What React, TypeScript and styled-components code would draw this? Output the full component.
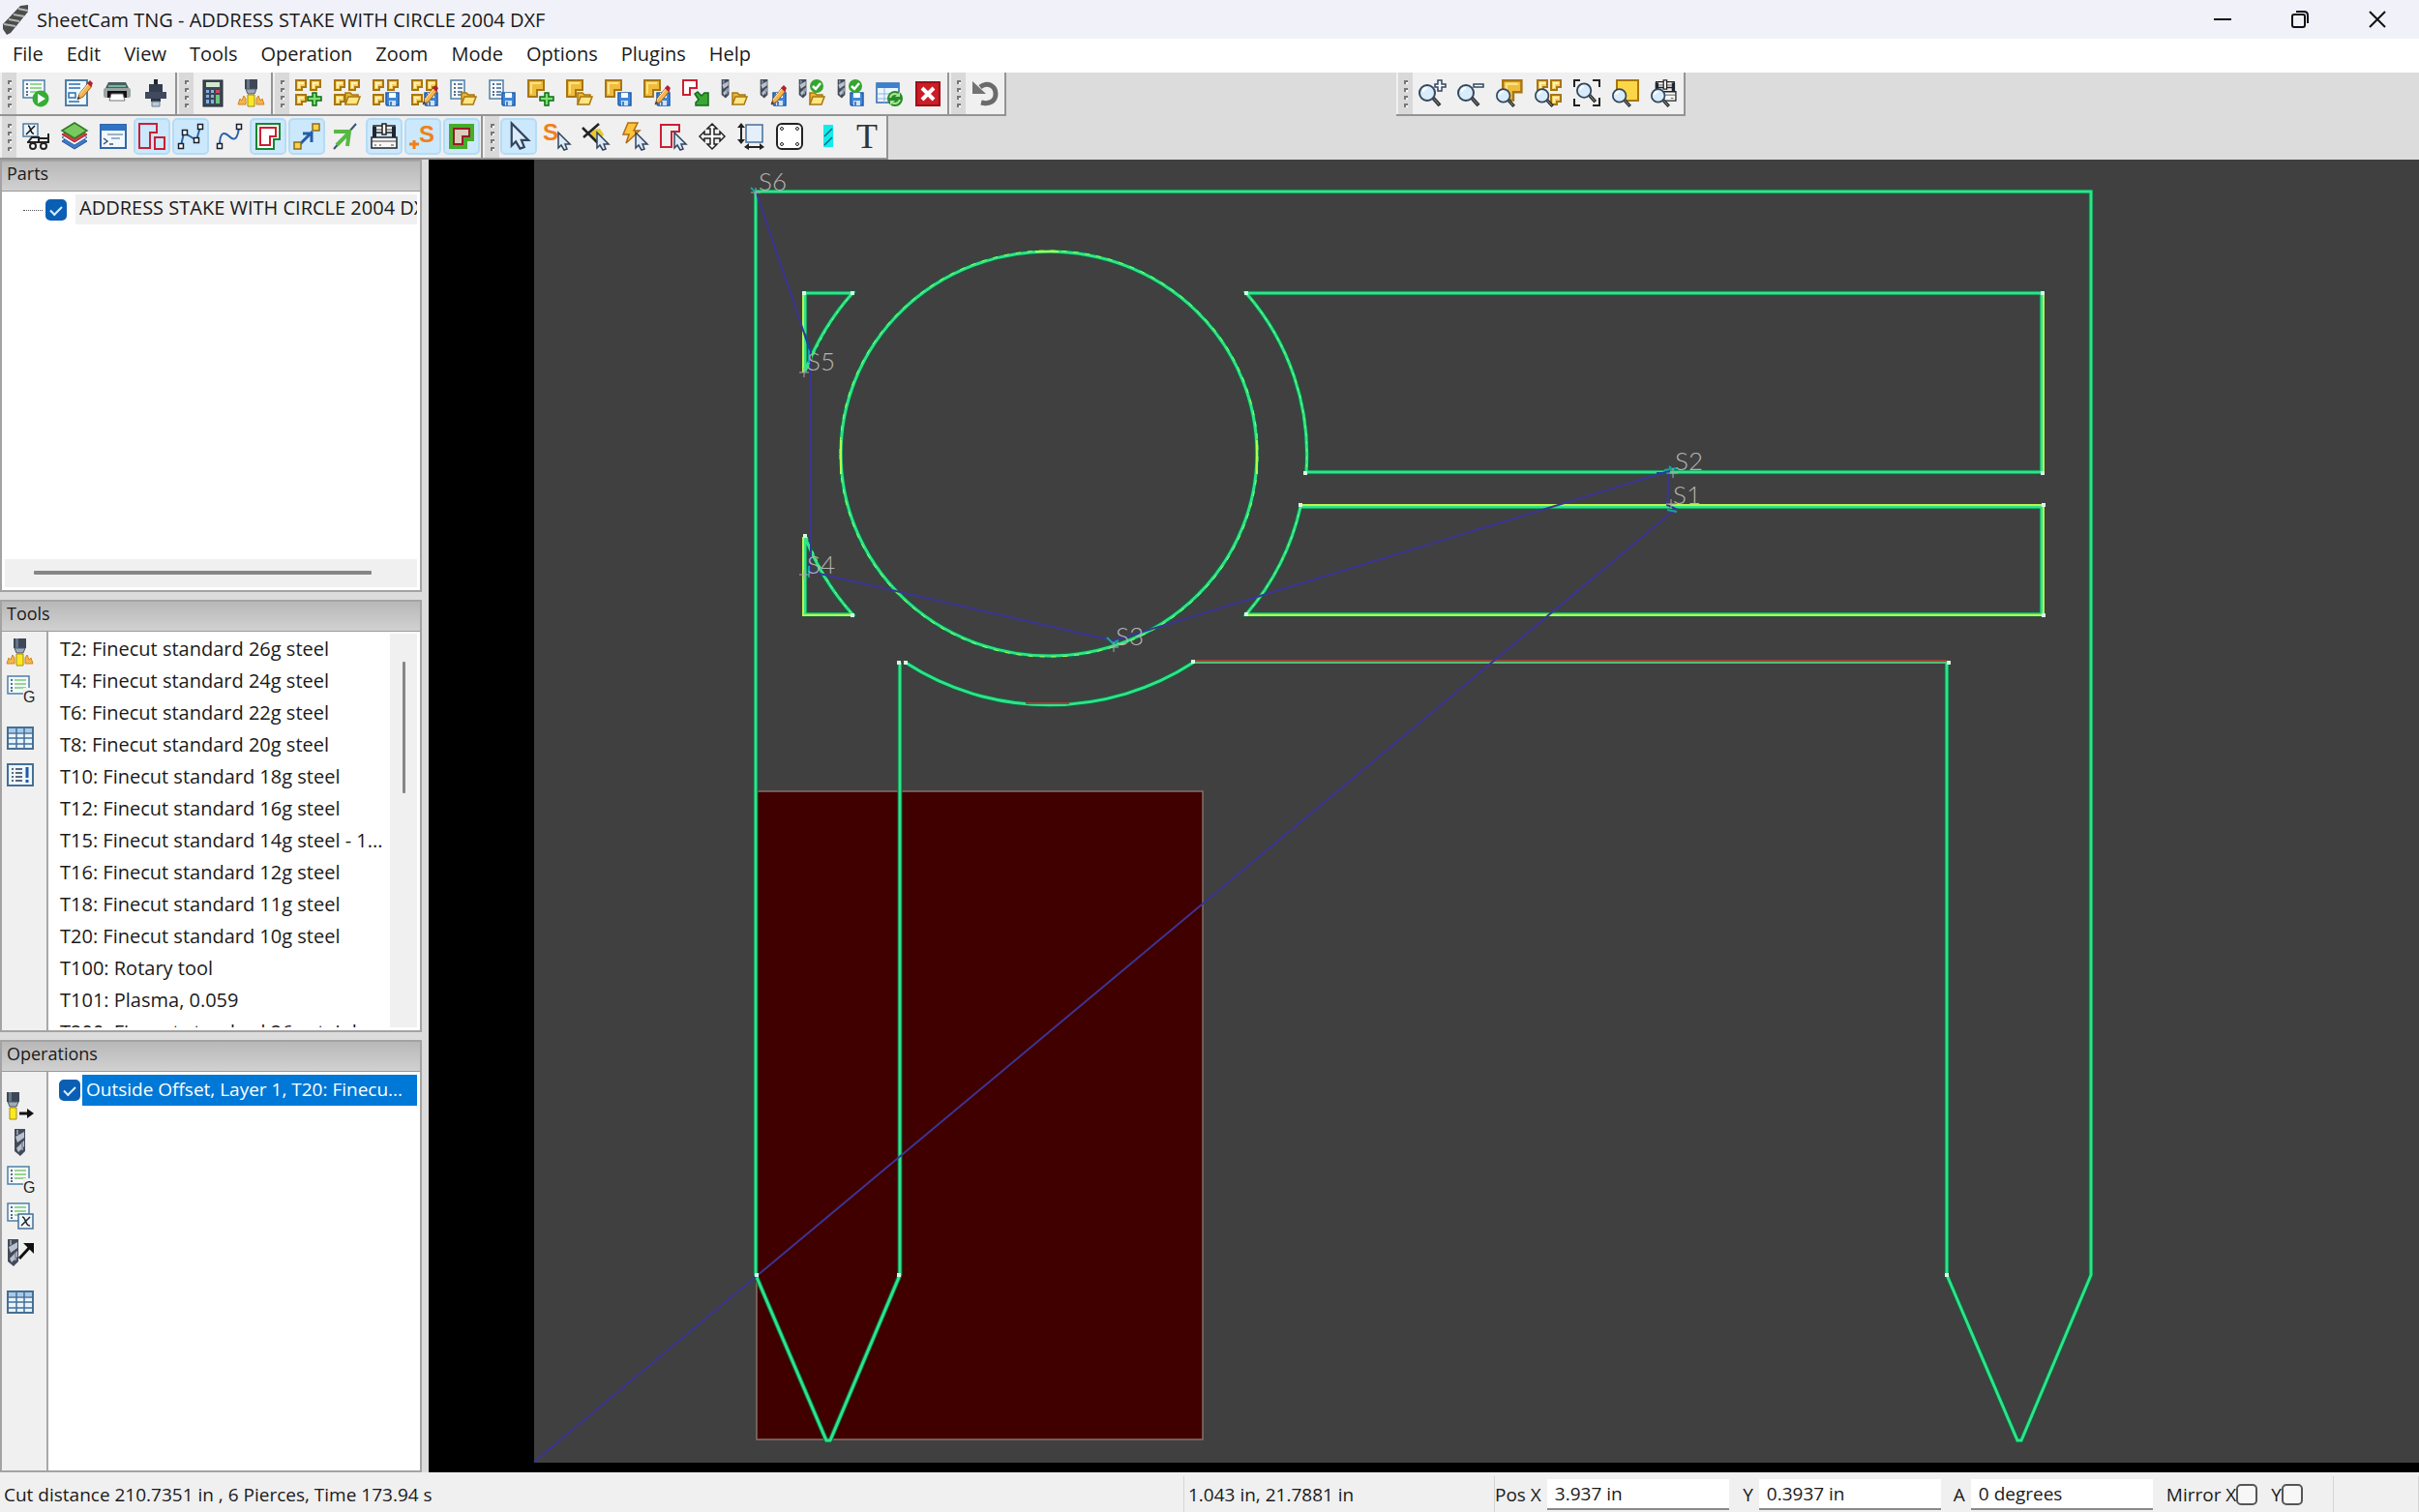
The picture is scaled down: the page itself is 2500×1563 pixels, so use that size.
import React, { useState } from 'react';
import styled, { createGlobalStyle } from 'styled-components';

const Global = createGlobalStyle`
  * { box-sizing: border-box; }
  html, body, #root { height: 100%; margin: 0; }
  body { overflow: hidden; }
  body, button, input {
    font-family: "Open Sans", "Noto Sans", sans-serif;
    font-size: 19px;
    line-height: 24px;
    color: #1a1a1a;
  }
`;

const Window = styled.div`
  display: flex;
  flex-direction: column;
  height: 100vh;
  background: #dcdcdc;
`;

const TitleBar = styled.header`
  display: flex;
  align-items: center;
  flex: none;
  height: 40px;
  padding: 0 3px 0 2px;
  background: #f1f2f9;
`;

const Title = styled.h1`
  flex: 1;
  margin: 0 0 0 8px;
  padding-top: 2px;
  font-size: 20px;
  font-weight: 400;
  white-space: nowrap;
`;

const CaptionButton = styled.button`
  display: grid;
  place-items: center;
  width: 80px;
  height: 40px;
  padding: 0;
  border: 0;
  background: none;
`;

const MenuBar = styled.nav`
  display: flex;
  flex: none;
  height: 35px;
  padding-left: 1px;
  background: #fff;
`;

const MenuButton = styled.button`
  padding: 0 12px 3px;
  border: 0;
  background: none;
  font-size: 20px;
`;

const ToolbarRow = styled.div`
  display: flex;
  flex: none;
  height: 45px;
`;

const ToolbarBox = styled.div<{ $far?: boolean }>`
  display: flex;
  height: 45px;
  margin-left: ${p => (p.$far ? '403px' : '0')};
  padding-left: 2px;
  border: solid #949494;
  border-width: 0 2px 2px 0;
  background: #f0f0f0;
`;

const Grip = styled.span`
  display: flex;
  flex-direction: column;
  align-items: center;
  justify-content: center;
  gap: 4px;
  width: 15px;
  height: 100%;
  background: #d9d9d9;
`;

const GripDot = styled.i`
  width: 4px;
  height: 4px;
  border: solid #777;
  border-width: 2px 0 0 2px;
  background: #fff;
`;

const ToolButton = styled.button<{ $on?: boolean; $gap?: boolean }>`
  display: grid;
  place-items: center;
  width: 38px;
  height: 38px;
  margin: 2px ${p => (p.$gap ? '5px' : '1px')} 0 1px;
  padding: 0;
  border: 2px solid ${p => (p.$on ? '#b4dcf5' : 'transparent')};
  border-radius: 5px;
  background: ${p => (p.$on ? '#cce8fc' : 'none')};
`;

const Main = styled.main`
  display: flex;
  flex: 1;
  min-height: 0;
`;

const Sidebar = styled.aside`
  display: flex;
  flex-direction: column;
  flex: none;
  gap: 8px;
  width: 443px;
  padding-right: 7px;
`;

const Panel = styled.section`
  display: flex;
  flex-direction: column;
  flex: 1;
  min-height: 0;
  border: 2px solid #a3a3a3;
`;

const PanelTitle = styled.h2`
  flex: none;
  height: 31px;
  margin: 0;
  padding: 0 5px;
  border-bottom: 1px solid #999;
  background: linear-gradient(#b8b8b8, #d1d1d1);
  font-size: 18px;
  font-weight: 400;
`;

const PanelBody = styled.div`
  display: flex;
  flex: 1;
  min-height: 0;
  background: #fff;
`;

const SideTools = styled.div<{ $low?: boolean }>`
  display: flex;
  flex-direction: column;
  flex: none;
  width: 48px;
  padding-top: ${p => (p.$low ? '16px' : '2px')};
  border-right: 2px solid #a8a8a8;
  background: #f0f0f0;
`;

const SideButton = styled.button<{ $spaced?: boolean }>`
  display: grid;
  place-items: center;
  width: 38px;
  height: 38px;
  margin-top: ${p => (p.$spaced ? '13px' : '0')};
  padding: 0;
  border: 0;
  background: none;
`;

const TreeView = styled.div`
  display: flex;
  flex: 1;
  flex-direction: column;
  min-width: 0;
  padding: 3px;
`;

const TreeRow = styled.div`
  display: flex;
  flex: 1;
  align-items: flex-start;
  padding-left: 19px;
`;

const Branch = styled.span`
  width: 20px;
  height: 17px;
  margin-right: 3px;
  border-bottom: 1px dotted #555;
`;

const TreeLabel = styled.label`
  flex: 1;
  min-width: 0;
  height: 31px;
  margin-left: 9px;
  padding: 2px 0 0 4px;
  overflow: hidden;
  background: #f0f0f0;
  font-size: 20px;
  white-space: nowrap;
`;

const Check = styled.input`
  appearance: none;
  display: grid;
  place-items: center;
  flex: none;
  width: 22px;
  height: 22px;
  margin: 0;
  border: 2px solid #555;
  border-radius: 5px;
  background: #f7f7f7;
  &:checked { border-color: #0a5fb4; background: #0a5fb4; }
  &:checked::after {
    content: '';
    width: 10px;
    height: 5px;
    border: solid #d9ecff;
    border-width: 0 0 2px 2px;
    transform: translateY(-1px) rotate(-45deg);
  }
`;

const TreeCheck = styled(Check)`
  margin-top: 5px;
`;

const HorizontalTrack = styled.div`
  flex: none;
  height: 29px;
  padding: 12px 47px 0 30px;
  background: #f0f0f0;
`;

const VerticalTrack = styled.div`
  flex: none;
  width: 28px;
  margin: 2px 3px 3px 0;
  padding: 29px 12px 0 13px;
  background: #f0f0f0;
`;

const Thumb = styled.div<{ $tall?: boolean }>`
  height: ${p => (p.$tall ? '136px' : '4px')};
  border-radius: 1px;
  background: #868686;
`;

const ToolList = styled.ul`
  flex: 1;
  min-width: 0;
  margin: 3px 0;
  padding: 0;
  overflow: hidden;
  list-style: none;
`;

const ToolItem = styled.li`
  height: 33px;
  padding: 3px 0 0 12px;
  font-size: 20px;
  white-space: nowrap;
`;

const OperationList = styled.div`
  flex: 1;
  min-width: 0;
  padding: 3px 3px 2px 11px;
`;

const OperationRow = styled.div`
  display: flex;
  align-items: center;
  gap: 2px;
  height: 32px;
`;

const OperationLabel = styled.label`
  flex: 1;
  min-width: 0;
  height: 32px;
  padding: 3px 0 0 4px;
  overflow: hidden;
  background: #0078d7;
  color: #fff;
  white-space: nowrap;
`;

const Viewport = styled.div`
  flex: 1;
  min-width: 0;
  background: #000;
`;

const Drawing = styled.svg`
  display: block;
  width: 100%;
  height: 100%;
  font-family: Lato, sans-serif;
  font-size: 26px;
  font-weight: 300;
`;

const StatusBar = styled.footer`
  display: flex;
  flex: none;
  height: 41px;
  padding: 4px 0 0;
  background: #f0f0f0;
`;

const StatusCell = styled.div<{ $width?: number }>`
  display: flex;
  align-items: center;
  flex: ${p => (p.$width ? `0 0 ${p.$width}px` : '1')};
  padding: 0 4px;
  border-right: 1px solid #d5d5d5;
  white-space: nowrap;
`;

const Field = styled.div`
  display: flex;
  align-items: center;
  justify-content: flex-end;
  gap: 6px;
  flex: none;
  min-width: 219px;
`;

const FieldInput = styled.input`
  width: 188px;
  height: 32px;
  padding: 0 8px;
  border: 0;
  border-bottom: 2px solid #8a8a8a;
  background: #fff;
`;

const Position = styled.div`
  display: flex;
  align-items: center;
  flex: none;
  width: 867px;
  border-right: 1px solid #d5d5d5;
  white-space: nowrap;
`;

const Mirror = styled.label`
  display: flex;
  align-items: center;
  flex: none;
  margin-left: 14px;
`;

/* ---------- icon pieces, all on a 28 × 28 grid ---------- */

const navy = '#2b3a52';

const IconSvg = styled.svg`
  display: block;
  overflow: visible;
`;

const Icon = ({ children }: { children: React.ReactNode }) => (
  <IconSvg width="28" height="28" viewBox="0 0 28 28" fill="none" aria-hidden="true">{children}</IconSvg>
);

const At = ({ x = 0, y = 0, s = 1, children }: { x?: number; y?: number; s?: number; children: React.ReactNode }) => (
  <g transform={`translate(${x} ${y}) scale(${s})`}>{children}</g>
);

const Part = () => (
  <>
    <path d="M1 1H17V11H10V18H1Z" fill="#efbd3c" stroke="#a87610" strokeWidth="2" />
    <path d="M3 3H14V5H5V15H3Z" fill="#ffe184" />
  </>
);
const MiniPart = () => (
  <>
    <path d="M1 1H11V8H7V11H1Z" fill="#f8cf5c" stroke="#a87610" strokeWidth="2" />
    <path d="M3 3H9V5H5V9H3Z" fill="#fff0b8" />
  </>
);
const Nest = () => (
  <>
    <MiniPart />
    <At x={15}><MiniPart /></At>
    <At y={15}><MiniPart /></At>
  </>
);
const Folder = () => (
  <>
    <path d="M12 26V14H17L19 16H25V19" fill="#e9b83a" stroke="#a87610" strokeWidth="1.5" />
    <path d="M12 26L15 18H27L24 26Z" fill="#ffe680" stroke="#a87610" strokeWidth="1.5" />
  </>
);
const Floppy = () => (
  <>
    <path d="M14 14H27V27H15L14 26Z" fill="#3f86d8" stroke="#1f5cab" strokeWidth="1.5" />
    <path d="M17 14H24V19H17Z" fill="#fff" />
    <path d="M17 22H24V27H17Z" fill="#cfe2f6" />
    <path d="M19 23V27" stroke="#1f5cab" strokeWidth="1.5" />
  </>
);
const Plus = () => <path d="M18 14H22V18H27V22H22V27H18V22H13V18H18Z" fill="#7fe070" stroke="#0c6b14" strokeWidth="1.5" />;
const Pencil = () => (
  <>
    <path d="M12 26L14 20L23 9L27 12L18 23Z" fill="#f4b451" stroke="#93591c" strokeWidth="1" />
    <path d="M14 21L23 10" stroke="#fff0b0" />
    <path d="M22 9L25 6L28 9L26 13Z" fill="#b3202c" />
    <path d="M12 26L13 23L15 24Z" fill="#333" />
  </>
);
const Doc = ({ wide }: { wide?: boolean }) => (
  <>
    <path d={wide ? 'M1 1H23V19H1Z' : 'M1 1H15V20H1Z'} fill="#f4faff" stroke="#4d7fa8" strokeWidth="1.5" />
    <path d="M4 5H6M4 9H6M4 13H6M4 16H6" stroke={navy} strokeWidth="1.5" />
    <path d={wide ? 'M8 5H20M8 9H20M8 13H20' : 'M8 5H13M8 9H13M8 13H13M8 16H13'} stroke={wide ? '#79c96d' : '#3e638c'} strokeWidth="1.5" />
  </>
);
const Drill = () => (
  <>
    <path d="M1 0H12V23L7 28L1 23Z" fill="#434b5a" />
    <path d="M2 8L11 3V9L4 14ZM3 20L11 12V18L5 24Z" fill="#b9c1cc" />
    <path d="M4 1V6M9 14V22" stroke="#8b95a4" strokeWidth="2" />
  </>
);
const SmallDrill = () => <At s={0.7}><Drill /></At>;
const Ok = () => (
  <>
    <circle cx="19" cy="7" r="7" fill="#34a52f" />
    <path d="M15 7L18 10L23 4" stroke="#fff" strokeWidth="2.5" />
  </>
);
const Lens = () => (
  <>
    <path d="M14 18L22 27" stroke="#333" strokeWidth="4" />
    <path d="M15 19L21 26" stroke="#999" strokeWidth="1" />
    <circle cx="9" cy="14" r="8" fill="#d9ecfb" stroke="#33475f" strokeWidth="2" />
    <path d="M5 13C5 10 7 9 9 9" stroke="#fff" strokeWidth="2" />
  </>
);
const Pointer = () => <path d="M15 10V26L18 23L21 28L24 27L22 22H27Z" fill="#dcebf9" stroke="#33445d" strokeWidth="1.5" />;
const SMark = ({ x, y }: { x: number; y: number }) => (
  <text x={x} y={y} fill="#f08019" fontFamily="Liberation Sans, sans-serif" fontWeight="700" fontSize="24">S</text>
);
const Torch = () => (
  <>
    <path d="M7 0H20V10H7Z" fill="#3d4756" />
    <path d="M9 0H12V10H9Z" fill="#66758a" />
    <path d="M8 10H19L17 15H10Z" fill="#9faaba" stroke="#4b586c" />
    <path d="M10 16H17V28H10Z" fill="#ffe81f" stroke="#a08b13" />
  </>
);
const Sparks = () => (
  <path d="M0 26L2 20L4 22L6 17L8 20V26ZM27 26L25 20L23 22L21 17L19 20V26Z" fill="#f5b54a" stroke="#cf8420" />
);
const Grid = () => (
  <>
    <path d="M1 3H27V25H1Z" fill="#e7f4fc" stroke="#456f96" strokeWidth="2" />
    <path d="M2 4H26V8H2Z" fill="#a8c8ea" />
    <path d="M1 9H27M1 14H27M1 20H27M10 3V25M18 3V25" stroke="#456f96" strokeWidth="1.5" />
  </>
);
const Machine = () => (
  <>
    <path d="M3 3H25V10H3ZM1 15H27V26H1Z" fill="#f7f7f7" stroke="#222" strokeWidth="1.5" />
    <path d="M2 4H6V15H2ZM22 4H26V15H22Z" fill="#1d2633" />
    <path d="M6 7H22" stroke="#444" />
    <path d="M12 1H16V12H12Z" fill="#fff" stroke="#222" strokeWidth="1.5" />
    <path d="M1 19H27M4 23H6M9 23H11M21 23H24" stroke="#444" />
  </>
);
const Nodes = ({ d, points }: { d: string; points: number[][] }) => (
  <>
    <path d={d} stroke="#2962a8" strokeWidth="2" />
    {points.map(([x, y]) => (
      <rect key={`${x}-${y}`} x={x - 2.5} y={y - 2.5} width="5" height="5" fill="#fff" stroke="#17202c" strokeWidth="1.5" />
    ))}
  </>
);

const icons: Record<string, React.ReactNode> = {
  run: <><Doc wide /><circle cx="19" cy="20" r="8.5" fill="#35ad35" /><path d="M16 15V25L24 20Z" fill="#fff" /></>,
  editJob: <><path d="M1 1H23V27H1Z" fill="#f2f9ff" stroke="#4d7fa8" strokeWidth="2" /><path d="M4 5H16M4 9H16M4 14H11V19H4ZM4 23H15" stroke="#2c6eb0" strokeWidth="1.5" /><At x={1} y={-5}><Pencil /></At></>,
  print: <><path d="M2 9L5 3H23L26 9Z" fill="#4a5f60" /><path d="M5 7H23" stroke="#73b79a" strokeWidth="2" /><rect x="0" y="9" width="28" height="10" rx="2" fill="#9aa2a4" /><path d="M4 12H24V19H4Z" fill="#111" /><path d="M8 15H20L22 22H6Z" fill="#fff" stroke="#777" /></>,
  spindle: <><path d="M12 0H16V5H12Z" fill="#1f2531" /><path d="M7 5H21V15H7Z" fill="#343e50" /><path d="M3 13H25V20H3Z" fill="#3f4a5e" /><path d="M9 20H19V23H9Z" fill="#2a3240" /><path d="M10 23H18V28H10Z" fill="#b9cbd8" stroke="#6b7c8c" /></>,
  calc: <><rect x="4" y="1" width="20" height="27" fill="#3d4655" stroke="#20262f" /><path d="M7 3H21V8H7Z" fill="#cfe9d0" /><path d="M7 11H10V14H7ZM12 11H15V14H12ZM7 16H10V19H7ZM12 16H15V19H12ZM7 21H10V25H7ZM12 21H15V25H12Z" fill="#7fb2e8" /><path d="M17 11H21V14H17Z" fill="#d6455c" /><path d="M17 16H21V25H17Z" fill="#6bc77b" /></>,
  torch: <><Torch /><Sparks /></>,
  nestNew: <><Nest /><Plus /></>,
  nestOpen: <><Nest /><Folder /></>,
  nestSave: <><Nest /><Floppy /></>,
  nestEdit: <><Nest /><Floppy /><Pencil /></>,
  docOpen: <><Doc /><Folder /></>,
  docSave: <><Doc /><Floppy /></>,
  partNew: <><Part /><Plus /></>,
  partOpen: <><Part /><Folder /></>,
  partSave: <><Part /><Floppy /></>,
  partEdit: <><Part /><Floppy /><Pencil /></>,
  partExport: <><path d="M1 1H15V9H8V16H1Z" fill="#fff" stroke="#cc1f34" strokeWidth="2" /><path d="M13 15L16 13L20 17L23 14H27V27H14V24L17 21Z" fill="#39a736" stroke="#14691a" strokeWidth="1.5" /></>,
  toolsOpen: <><SmallDrill /><Folder /></>,
  toolsEdit: <><SmallDrill /><Floppy /><Pencil /></>,
  opsOpen: <><SmallDrill /><Folder /><Ok /></>,
  opsSave: <><SmallDrill /><Floppy /><Ok /></>,
  refresh: <><path d="M1 4H24V24H1Z" fill="#edf6fd" stroke="#2b68af" strokeWidth="1.5" /><path d="M1 4H24V9H1Z" fill="#3b82d0" /><path d="M2 15H24M2 20H24M9 9V24" stroke="#8bb5dd" /><circle cx="20" cy="20" r="8" fill="#288b2c" /><path d="M15 19C16 14 22 14 24 17M25 21C23 26 18 26 16 23" stroke="#a9e595" strokeWidth="2" /><path d="M25 13V18H20ZM15 27V22H20Z" fill="#a9e595" /></>,
  remove: <><rect x="2" y="3" width="24" height="24" fill="#cb1d26" stroke="#9e0e15" strokeWidth="2" /><path d="M8 9L20 21M20 9L8 21" stroke="#fff" strokeWidth="4" /></>,
  undo: <><path d="M9 8C17 2 25 7 25 15C25 23 18 26 10 24" stroke="#6b6b6b" strokeWidth="5" /><path d="M1 2V15H15Z" fill="#737373" /></>,
  zoomIn: <><Lens /><path d="M20 1H24V5H28V8H24V12H20V8H17V5H20Z" fill="#fff" stroke="#30465f" strokeWidth="1.5" /></>,
  zoomOut: <><Lens /><path d="M17 5H27V8H17Z" fill="#fff" stroke="#30465f" strokeWidth="1.5" /></>,
  zoomPart: <><At x={6} s={1.2}><Part /></At><At y={5} s={0.85}><Lens /></At></>,
  zoomNest: <><At x={2}><MiniPart /></At><At x={16}><MiniPart /></At><At x={16} y={15}><MiniPart /></At><At y={5} s={0.85}><Lens /></At></>,
  zoomFit: <><At x={3} y={-1} s={0.9}><Lens /></At><path d="M1 8V1H7M20 1H27V8M1 20V27H7M27 19V27H20" stroke="#222" strokeWidth="2" /></>,
  zoomMaterial: <><path d="M5 1H27V22H5Z" fill="#fbd747" stroke="#a87610" strokeWidth="2" /><At y={5} s={0.85}><Lens /></At></>,
  zoomMachine: <><At x={3} s={0.85}><Machine /></At><At y={5} s={0.85}><Lens /></At></>,
  variables: <><path d="M1 1H16V14H1Z" fill="#edf6fd" stroke="#4d7fa8" strokeWidth="1.5" /><path d="M4 12L13 3M6 3C9 3 8 12 12 11" stroke="#111" strokeWidth="1.5" /><path d="M5 20H27V11M17 16H27M6 20L10 15H17V20" stroke="#222" strokeWidth="2" /><circle cx="11" cy="24" r="3" fill="#fff" stroke="#222" strokeWidth="2" /><circle cx="22" cy="24" r="3" fill="#fff" stroke="#222" strokeWidth="2" /></>,
  layers: <><path d="M1 19L14 11L27 19L14 27Z" fill="#3d79c8" stroke="#24569b" /><path d="M1 15L14 8L27 15L14 23Z" fill="#fff" stroke="#356bb1" /><path d="M1 12L14 5L27 12L14 20Z" fill="#d83d45" stroke="#a42229" /><path d="M1 8L14 0L27 8L14 16Z" fill="#79c95f" stroke="#327a28" strokeWidth="1.5" /></>,
  console: <><path d="M1 2H27V26H1Z" fill="#f1f8fe" stroke="#3267a8" strokeWidth="2" /><path d="M1 2H27V8H1Z" fill="#2e73c5" /><path d="M8 12H24M12 16H21" stroke="#8199b5" strokeWidth="1.5" /><path d="M4 16L8 19L4 22M10 22H14" stroke="#41566d" strokeWidth="1.5" /></>,
  redParts: <path d="M1 1H19V10H12V26H1ZM17 15H27V27H17Z" stroke="#cc1f34" strokeWidth="2" />,
  polyNodes: <Nodes d="M4 24L7 10L20 18L24 4" points={[[4, 24], [8, 10], [20, 18], [24, 4]]} />,
  curveNodes: <Nodes d="M4 24C4 7 10 10 14 14C20 20 23 15 24 4" points={[[4, 24], [24, 4]]} />,
  outline: <><path d="M2 1H26V17H20V27H2Z" fill="#fff" stroke="#16862f" strokeWidth="2" /><path d="M6 5H22V14H16V23H6Z" stroke="#cc1f34" strokeWidth="2" /></>,
  rapids: <><path d="M5 24L20 9M10 11H19V20" stroke="#245da5" strokeWidth="3" /><path d="M20 1H27V8H20ZM1 20H8V27H1Z" fill="#ffd044" stroke="#8a6c1d" strokeWidth="1.5" /></>,
  direction: <><path d="M2 27L25 1" stroke="#345675" strokeWidth="2" /><path d="M2 9L18 9L16 24M18 10L5 23" stroke="#57b943" strokeWidth="4" /></>,
  machine: <Machine />,
  starts: <><SMark x={10} y={20} /><path d="M5 18V27M0 22H10" stroke="#f08019" strokeWidth="3" /></>,
  kerf: <><path d="M4 4H24V16H17V24H4Z" fill="#d9cfc0" stroke="#45ad29" strokeWidth="6" /><path d="M6 6H22V14H15V22H6Z" stroke="#9c1a26" strokeWidth="2" /></>,
  select: <At x={-15} y={-14} s={1.45}><Pointer /></At>,
  selectStart: <><SMark x={-1} y={18} /><Pointer /></>,
  selectLine: <><path d="M8 7L18 6L22 12L18 19L10 17Z" fill="#e5c934" /><path d="M1 15L17 1M0 5L17 22" stroke="#222" strokeWidth="2.5" /><Pointer /></>,
  selectCut: <><path d="M7 0H17L13 8H19L5 21L8 12H2Z" fill="#ffc33b" stroke="#b06d13" strokeWidth="1.5" /><Pointer /></>,
  selectPart: <><path d="M1 2H20V9H12V25H1Z" stroke="#cc1f34" strokeWidth="2" /><Pointer /></>,
  move: <path d="M14 1L19 6H16V12H22V9L27 14L22 19V16H16V22H19L14 27L9 22H12V16H6V19L1 14L6 9V12H12V6H9Z" fill="#fff" stroke="#222" strokeWidth="1.5" />,
  resize: <><path d="M9 2H26V20H9Z" fill="#e3f0fc" stroke="#446c9c" strokeWidth="1.5" /><path d="M4 4V18M10 25H24" stroke="#222" strokeWidth="2" /><path d="M4 0L8 5H0ZM4 22L8 17H0ZM7 25L12 21V28ZM28 25L23 21V28Z" fill="#222" /></>,
  plate: <><rect x="1" y="1" width="26" height="26" rx="5" fill="#fff" stroke="#222" strokeWidth="2" /><g stroke="#222"><circle cx="6" cy="6" r="1.5" /><circle cx="22" cy="6" r="1.5" /><circle cx="6" cy="22" r="1.5" /><circle cx="22" cy="22" r="1.5" /></g></>,
  hatch: <><path d="M9 2H19V25H9Z" fill="#10ecee" /><path d="M10 14L18 6M10 23L18 15" stroke="#1c6370" strokeWidth="1.5" /></>,
  text: <text x="14" y="26" textAnchor="middle" fill="#333" fontFamily="Liberation Serif, serif" fontSize="36">T</text>,
  gcode: <><Doc wide /><rect x="17" y="13" width="11" height="15" fill="#f0f0f0" /><text x="17" y="28" fill="#222" fontFamily="Liberation Sans, sans-serif" fontSize="16">G</text></>,
  grid: <Grid />,
  notes: <><path d="M1 3H27V25H1Z" fill="#edf7fe" stroke="#456f96" strokeWidth="2" /><path d="M5 8H7M5 12H7M5 16H7M5 20H7M9 8H16M9 12H16M9 16H16M9 20H16" stroke={navy} strokeWidth="1.5" /><path d="M21 6V17M21 19V22" stroke="#1d5aa8" strokeWidth="3" /></>,
  jet: <><At x={-7}><Torch /></At><path d="M13 22H24" stroke="#111" strokeWidth="3" /><path d="M21 17L28 22L21 27Z" fill="#111" /></>,
  drill: <At x={7}><Drill /></At>,
  codeVar: <><Doc wide /><path d="M12 12H27V27H12Z" fill="#edf7fe" stroke="#456f96" strokeWidth="1.5" /><path d="M15 24L24 15M16 15C20 15 19 25 24 24" stroke="#222" strokeWidth="1.5" /></>,
  drillMove: <><Drill /><path d="M13 20L24 8" stroke="#111" strokeWidth="3" /><path d="M17 4H28V15Z" fill="#111" /></>,
};

type Tool = { id: string; label: string; on?: boolean; gap?: boolean };
const t = (id: string, label: string, on = false, gap = false): Tool => ({ id, label, on, gap });

const Toolbar = ({ name, tools, far }: { name: string; tools: Tool[]; far?: boolean }) => (
  <ToolbarBox role="toolbar" aria-label={name} $far={far}>
    <Grip><GripDot /><GripDot /><GripDot /><GripDot /></Grip>
    {tools.map(x => (
      <ToolButton key={x.id} aria-label={x.label} $on={x.on} $gap={x.gap}><Icon>{icons[x.id]}</Icon></ToolButton>
    ))}
  </ToolbarBox>
);

const jobTools = [t('run', 'Run post processor', false, true), t('editJob', 'Job options'), t('print', 'Print'), t('spindle', 'Machine options')];
const calcTools = [t('calc', 'Calculator'), t('torch', 'Plasma tool')];
const fileTools = [
  t('nestNew', 'New job'), t('nestOpen', 'Open job'), t('nestSave', 'Save job'), t('nestEdit', 'Save job as'),
  t('docOpen', 'Open job options'), t('docSave', 'Save job options'), t('partNew', 'New part'), t('partOpen', 'Open part'),
  t('partSave', 'Save part'), t('partEdit', 'Save part as'), t('partExport', 'Import drawing'), t('toolsOpen', 'Open tool set'),
  t('toolsEdit', 'Save tool set'), t('opsOpen', 'Open operations'), t('opsSave', 'Save operations'), t('refresh', 'Reload'), t('remove', 'Delete'),
];
const zoomTools = [
  t('zoomIn', 'Zoom in'), t('zoomOut', 'Zoom out'), t('zoomPart', 'Zoom to part'), t('zoomNest', 'Zoom to all parts'),
  t('zoomFit', 'Zoom to fit'), t('zoomMaterial', 'Zoom to material'), t('zoomMachine', 'Zoom to machine'),
];
const viewTools = [
  t('variables', 'Variables'), t('layers', 'Layers'), t('console', 'Console'), t('redParts', 'Show parts', true),
  t('polyNodes', 'Show segments', true), t('curveNodes', 'Show curves'), t('outline', 'Show outlines', true),
  t('rapids', 'Show rapids', true), t('direction', 'Show direction'), t('machine', 'Show machine', true),
  t('starts', 'Show start points', true), t('kerf', 'Show kerf', true),
];
const modeTools = [
  t('select', 'Select', true), t('selectStart', 'Edit start points'), t('selectLine', 'Edit tabs'), t('selectCut', 'Edit cuts'),
  t('selectPart', 'Edit contours'), t('move', 'Move'), t('resize', 'Resize'), t('plate', 'Material'), t('hatch', 'Hatch'), t('text', 'Text'),
];

const menus = ['File', 'Edit', 'View', 'Tools', 'Operation', 'Zoom', 'Mode', 'Options', 'Plugins', 'Help'];

const toolSet = [
  'T2: Finecut standard 26g steel', 'T4: Finecut standard 24g steel', 'T6: Finecut standard 22g steel',
  'T8: Finecut standard 20g steel', 'T10: Finecut standard 18g steel', 'T12: Finecut standard 16g steel',
  'T15: Finecut standard 14g steel - 1...', 'T16: Finecut standard 12g steel', 'T18: Finecut standard 11g steel',
  'T20: Finecut standard 10g steel', 'T100: Rotary tool', 'T101: Plasma, 0.059', 'T200: Finecut standard 26g stainl...',
];

const contours = [
  'M781 198H2161V1318L2089 1489H2085L2012 1318V685M781 198V1318L854 1489H858L930 1318V685',
  'M936 685A267 259 0 0 0 1233 685',
  'M881 303H832V384A267 259 0 0 1 881 303Z',
  'M832 555V635H881A267 259 0 0 1 832 555Z',
  'M1288 303H2110V488H1350A267 259 0 0 0 1288 303Z',
  'M1344 524H2110V635H1288A267 259 0 0 0 1344 524Z',
  'M869 469A215 209 0 1 1 1299 469A215 209 0 1 1 869 469Z',
];

const corners = [
  [831, 303], [881, 303], [1288, 303], [2111, 303], [1349, 489], [2111, 489], [1344, 522], [2112, 522], [832, 554],
  [2112, 636], [1288, 635], [881, 636], [929, 685], [936, 685], [1233, 684], [2014, 685], [782, 1318], [929, 1318],
  [2012, 1318],
];

const starts = [
  { name: 'S1', x: 1729, y: 521, px: 1727, py: 521 },
  { name: 'S2', x: 1731, y: 486, px: 1729, py: 489 },
  { name: 'S3', x: 1153, y: 667, px: 1151, py: 669 },
  { name: 'S4', x: 834, y: 593, px: 831, py: 594 },
  { name: 'S5', x: 834, y: 383, px: 831, py: 385 },
  { name: 'S6', x: 784, y: 197, px: 781, py: 199 },
];

const CutView = () => (
  <Drawing viewBox="443 165 2057 1357" preserveAspectRatio="xMinYMin meet" role="img" aria-label="Cut path preview">
    <path d="M552 165H2500V1512H552Z" fill="#404040" />
    <path d="M782 818H1243V1488H782Z" fill="#400000" stroke="#857068" strokeWidth="1.5" />
    <g fill="none">
      {contours.map(d => <path key={d} d={d} stroke="#0b6840" strokeWidth="5" />)}
      {contours.map(d => <path key={d} d={d} stroke="#30e388" strokeWidth="3" />)}
      <path d="M1233 685H2012" stroke="#55bd78" strokeWidth="2" />
      <path d="M1233 683H2012M1060 727H1105" stroke="#984438" strokeWidth="2" />
      <path
        d="M830 303V385M830 555V636H881M2112 303V489M1344 522H2112V636H1288M1070 260H1094M1299 455V490M869 455V490"
        stroke="#b8f64c"
        strokeWidth="2"
      />
      <path d="M868 469A216 210 0 1 1 1300 469A216 210 0 1 1 868 469Z" stroke="#b8f64c" strokeDasharray="5 7" />
      <path d="M881 303A267 259 0 0 0 834 384M834 555A267 259 0 0 0 881 635M1288 303A267 259 0 0 1 1350 488M1344 524A267 259 0 0 1 1288 635" stroke="#9df055" strokeDasharray="3 5" />
      <path d="M552 1511L1732 526L1723 522L1725 487L1155 661L1149 662L838 591V365L782 200" stroke="#3b3594" strokeWidth="2" />
      <path d="M1720 486L1733 484M1725 482L1730 487M1723 527L1733 529M1144 659L1150 665L1156 662M836 360V375M836 585V597M776 194L782 200" stroke="#12a59c" strokeWidth="2" />
      <path d="M832 345L837 362M1712 489H1722" stroke="#16469c" strokeWidth="2" />
    </g>
    {corners.map(([x, y]) => <rect key={`${x}-${y}`} x={x - 2} y={y - 2} width="4" height="4" fill="#d8f5e4" />)}
    {starts.map(s => (
      <g key={s.name}>
        <path d={`M${s.px - 5} ${s.py}H${s.px + 5}M${s.px} ${s.py - 5}V${s.py + 5}`} stroke="#a9a9a9" />
        <text x={s.x} y={s.y} fill="#b4b4b4">{s.name}</text>
      </g>
    ))}
  </Drawing>
);

const SideBar = ({ tools, low, breakAt }: { tools: string[][]; low?: boolean; breakAt: number }) => (
  <SideTools $low={low}>
    {tools.map(([id, label], i) => (
      <SideButton key={id} aria-label={label} $spaced={i === breakAt}><Icon>{icons[id]}</Icon></SideButton>
    ))}
  </SideTools>
);

export default function App() {
  const [partOn, setPartOn] = useState(true);
  const [opOn, setOpOn] = useState(true);

  return (
    <Window>
      <Global />
      <TitleBar>
        <svg width="28" height="34" viewBox="0 0 28 34" aria-hidden="true">
          <path d="M1 22L19 3L27 2V9L9 31L5 33L1 27Z" fill="#4c4c4c" />
          <path d="M2 22L14 24M7 17L18 19M12 12L23 14M17 6L27 8" stroke="#b5b5b5" strokeWidth="2" />
        </svg>
        <Title>SheetCam TNG - ADDRESS STAKE WITH CIRCLE 2004 DXF</Title>
        <CaptionButton aria-label="Minimize">
          <svg width="18" height="18" stroke="#111" strokeWidth="2"><path d="M0 9H18" /></svg>
        </CaptionButton>
        <CaptionButton aria-label="Restore">
          <svg width="18" height="18" fill="none" stroke="#111" strokeWidth="2">
            <rect x="1" y="4" width="13" height="13" rx="2" />
            <path d="M5 1H13C16 1 17 3 17 5V13" />
          </svg>
        </CaptionButton>
        <CaptionButton aria-label="Close">
          <svg width="18" height="18" stroke="#111" strokeWidth="2"><path d="M1 1L17 17M17 1L1 17" /></svg>
        </CaptionButton>
      </TitleBar>
      <MenuBar>
        {menus.map(m => <MenuButton key={m}>{m}</MenuButton>)}
      </MenuBar>
      <ToolbarRow>
        <Toolbar name="Job" tools={jobTools} />
        <Toolbar name="Utilities" tools={calcTools} />
        <Toolbar name="File" tools={fileTools} />
        <Toolbar name="Undo" tools={[t('undo', 'Undo')]} />
        <Toolbar name="Zoom" tools={zoomTools} far />
      </ToolbarRow>
      <ToolbarRow>
        <Toolbar name="View" tools={viewTools} />
        <Toolbar name="Mode" tools={modeTools} />
      </ToolbarRow>
      <Main>
        <Sidebar>
          <Panel>
            <PanelTitle>Parts</PanelTitle>
            <PanelBody>
              <TreeView>
                <TreeRow>
                  <Branch />
                  <TreeCheck type="checkbox" id="part" checked={partOn} onChange={e => setPartOn(e.target.checked)} />
                  <TreeLabel htmlFor="part">ADDRESS STAKE WITH CIRCLE 2004 DXF</TreeLabel>
                </TreeRow>
                <HorizontalTrack><Thumb /></HorizontalTrack>
              </TreeView>
            </PanelBody>
          </Panel>
          <Panel>
            <PanelTitle>Tools</PanelTitle>
            <PanelBody>
              <SideBar
                breakAt={2}
                tools={[['torch', 'New plasma tool'], ['gcode', 'New code snippet'], ['grid', 'Edit tool table'], ['notes', 'Tool notes']]}
              />
              <ToolList>
                {toolSet.map(name => <ToolItem key={name}>{name}</ToolItem>)}
              </ToolList>
              <VerticalTrack><Thumb $tall /></VerticalTrack>
            </PanelBody>
          </Panel>
          <Panel>
            <PanelTitle>Operations</PanelTitle>
            <PanelBody>
              <SideBar
                low
                breakAt={5}
                tools={[['jet', 'Jet cutting'], ['drill', 'Drilling'], ['gcode', 'Insert code'], ['codeVar', 'Set variable'], ['drillMove', 'Move tool'], ['grid', 'Edit operations']]}
              />
              <OperationList>
                <OperationRow>
                  <Check type="checkbox" id="operation" checked={opOn} onChange={e => setOpOn(e.target.checked)} />
                  <OperationLabel htmlFor="operation">Outside Offset, Layer 1, T20: Finecu...</OperationLabel>
                </OperationRow>
              </OperationList>
            </PanelBody>
          </Panel>
        </Sidebar>
        <Viewport><CutView /></Viewport>
      </Main>
      <StatusBar>
        <StatusCell>Cut distance 210.7351 in , 6 Pierces, Time 173.94 s</StatusCell>
        <StatusCell $width={321}>1.043 in, 21.7881 in</StatusCell>
        <Position>
          <Field><label htmlFor="posx">Pos X</label><FieldInput id="posx" defaultValue="3.937 in" /></Field>
          <Field><label htmlFor="posy">Y</label><FieldInput id="posy" defaultValue="0.3937 in" /></Field>
          <Field><label htmlFor="angle">A</label><FieldInput id="angle" defaultValue="0 degrees" /></Field>
          <Mirror>Mirror X<Check type="checkbox" /></Mirror>
          <Mirror>Y<Check type="checkbox" /></Mirror>
        </Position>
        <StatusCell $width={88} />
      </StatusBar>
    </Window>
  );
}
